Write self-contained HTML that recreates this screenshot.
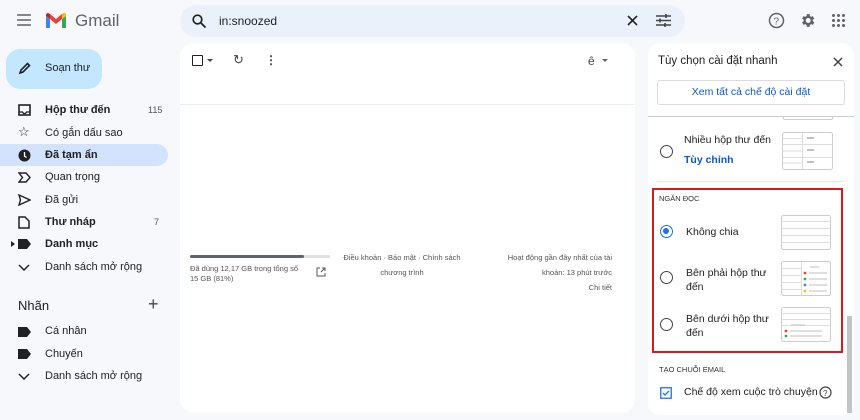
<!DOCTYPE html><html><head><meta charset="utf-8"><style>
*{margin:0;padding:0;box-sizing:border-box}
body{width:860px;height:420px;background:#f6f8fc;font-family:"Liberation Sans",sans-serif;color:#202124;position:relative;overflow:hidden;font-size:11px}
.a{position:absolute}
.nav{position:absolute;left:45px;font-size:11px;color:#202124}
.ic{position:absolute;left:18px}
.th{position:absolute;border:1px solid #ccc;border-radius:2px;background:#fff}
.rad{position:absolute;left:660px;width:13px;height:13px;border:1.5px solid #444;border-radius:50%}
</style></head><body>
<!-- header -->
<svg class="a" style="left:17px;top:14px" width="14" height="12"><path d="M0 1h14M0 6h14M0 11h14" stroke="#5f6368" stroke-width="1.6"/></svg>
<svg class="a" style="left:45px;top:12px" width="22" height="17" viewBox="0 0 22 17"><path d="M1 4v12h4V7z" fill="#4285f4"/><path d="M17 7v9h4V4z" fill="#34a853"/><path d="M17 2v5l4-3V3c0-2-2-3-4-1z" fill="#fbbc04"/><path d="M5 7V2l6 5 6-5v5l-6 5z" fill="#ea4335"/><path d="M1 3c0-2 2-2.5 4-1v5L1 4z" fill="#c5221f"/></svg>
<div class="a" style="left:75px;top:11px;font-size:17px;color:#5f6368">Gmail</div>
<div class="a" style="left:180px;top:5px;width:505px;height:32px;background:#eaf1fb;border-radius:16px"></div>
<svg class="a" style="left:192px;top:14px" width="14" height="14"><circle cx="5.5" cy="5.5" r="4.3" stroke="#202124" stroke-width="1.7" fill="none"/><path d="M9 9l4.5 4.5" stroke="#202124" stroke-width="1.8"/></svg>
<div class="a" style="left:219px;top:14px;font-size:12px">in:snoozed</div>
<svg class="a" style="left:627px;top:15px" width="11" height="11"><path d="M1 1l9 9M10 1l-9 9" stroke="#202124" stroke-width="1.6"/></svg>
<svg class="a" style="left:656px;top:14px" width="15" height="13"><path d="M0 2h15M0 6.5h15M0 11h15" stroke="#444" stroke-width="1.5"/><path d="M10 0v4M4 4.5v4M9 9v4" stroke="#444" stroke-width="1.6"/></svg>
<svg class="a" style="left:768px;top:12px" width="17" height="17"><circle cx="8.5" cy="8.5" r="7" fill="none" stroke="#5f6368" stroke-width="1.5"/><text x="5.5" y="12.5" font-size="10" fill="#5f6368" font-family="Liberation Sans">?</text></svg>
<svg class="a" style="left:799px;top:12px" width="17" height="17" viewBox="0 0 24 24"><path fill="#5f6368" d="M19.4 13a7.5 7.5 0 000-2l2.1-1.6-2-3.5-2.5 1a7 7 0 00-1.7-1L15 3h-4l-.4 2.9a7 7 0 00-1.7 1l-2.5-1-2 3.5L6.5 11a7.5 7.5 0 000 2l-2.1 1.6 2 3.5 2.5-1a7 7 0 001.7 1L11 21h4l.4-2.9a7 7 0 001.7-1l2.5 1 2-3.5zM13 15.5a3.5 3.5 0 110-7 3.5 3.5 0 010 7z"/></svg>
<svg class="a" style="left:832px;top:14px" width="13" height="13"><g fill="#5f6368"><circle cx="1.5" cy="1.5" r="1.5"/><circle cx="6.5" cy="1.5" r="1.5"/><circle cx="11.5" cy="1.5" r="1.5"/><circle cx="1.5" cy="6.5" r="1.5"/><circle cx="6.5" cy="6.5" r="1.5"/><circle cx="11.5" cy="6.5" r="1.5"/><circle cx="1.5" cy="11.5" r="1.5"/><circle cx="6.5" cy="11.5" r="1.5"/><circle cx="11.5" cy="11.5" r="1.5"/></g></svg>
<!-- sidebar -->
<div class="a" style="left:6px;top:49px;width:96px;height:40px;background:#c2e7ff;border-radius:14px"></div>
<svg class="a" style="left:18px;top:62px" width="13" height="13"><path d="M2 11l1-3 6.5-6.5 2 2L5 10z" fill="none" stroke="#202124" stroke-width="1.6"/></svg>
<div class="a" style="left:45px;top:62px;font-size:11px">Soạn thư</div>
<div class="a" style="left:0;top:144px;width:168px;height:22px;background:#d3e3fd;border-radius:0 11px 11px 0"></div>
<svg class="ic" style="top:104px" width="13" height="12"><rect x="1" y="1" width="11" height="10" fill="none" stroke="#202124" stroke-width="1.6"/><path d="M1 8h3.5l1 1.5h2l1-1.5H12" stroke="#202124" fill="none" stroke-width="1.3"/></svg>
<div class="nav" style="top:104px;font-weight:bold">Hộp thư đến</div><div class="a" style="left:148px;top:105px;font-size:9px;color:#555">115</div>
<div class="ic" style="top:124px;font-size:13px;left:18px">☆</div><div class="nav" style="top:127px">Có gắn dấu sao</div>
<svg class="ic" style="top:149px" width="13" height="13"><circle cx="6.5" cy="6.5" r="6" fill="#202124"/><path d="M6.5 3v4l2 1.5" stroke="#fff" stroke-width="1.3" fill="none"/></svg>
<div class="nav" style="top:149px;font-weight:bold">Đã tạm ẩn</div>
<svg class="ic" style="top:172px" width="13" height="11"><path d="M1 1h7l4 4.5L8 10H1l3.5-4.5z" fill="none" stroke="#202124" stroke-width="1.4"/></svg><div class="nav" style="top:171px">Quan trọng</div>
<svg class="ic" style="top:194px" width="13" height="12"><path d="M1 1l11 5-11 5 1.5-5z" fill="none" stroke="#202124" stroke-width="1.4"/></svg><div class="nav" style="top:194px">Đã gửi</div>
<svg class="ic" style="top:216px" width="12" height="13"><path d="M1 1h6l4 4v7H1z" fill="none" stroke="#202124" stroke-width="1.5"/></svg><div class="nav" style="top:216px;font-weight:bold">Thư nháp</div><div class="a" style="left:154px;top:217px;font-size:9px;color:#555">7</div>
<div class="a" style="left:11px;top:241px;border-left:4px solid #202124;border-top:3px solid transparent;border-bottom:3px solid transparent"></div>
<svg class="ic" style="top:239px" width="13" height="10"><path d="M0 0h9l4 5-4 5H0z" fill="#202124"/></svg><div class="nav" style="top:238px;font-weight:bold">Danh mục</div>
<svg class="ic" style="top:264px" width="12" height="7"><path d="M1 1l5 5 5-5" stroke="#202124" fill="none" stroke-width="1.5"/></svg><div class="nav" style="top:261px">Danh sách mở rộng</div>
<div class="a" style="left:18px;top:298px;font-size:13px">Nhãn</div>
<div class="a" style="left:148px;top:294px;font-size:18px;color:#444">+</div>
<svg class="ic" style="top:327px" width="13" height="10"><path d="M0 0h9l4 5-4 5H0z" fill="#202124"/></svg><div class="nav" style="top:325px">Cá nhân</div>
<svg class="ic" style="top:349px" width="13" height="10"><path d="M0 0h9l4 5-4 5H0z" fill="#202124"/></svg><div class="nav" style="top:348px">Chuyến</div>
<svg class="ic" style="top:373px" width="12" height="7"><path d="M1 1l5 5 5-5" stroke="#202124" fill="none" stroke-width="1.5"/></svg><div class="nav" style="top:370px">Danh sách mở rộng</div>
<!-- main -->
<div class="a" style="left:180px;top:43px;width:455px;height:370px;background:#fff;border-radius:14px"></div>
<div class="a" style="left:180px;top:104px;width:455px;height:1px;background:#eee"></div>
<div class="a" style="left:192px;top:55px;width:11px;height:11px;border:1.6px solid #202124;border-radius:1px"></div>
<div class="a" style="left:207px;top:59px;border-top:3px solid #444;border-left:3px solid transparent;border-right:3px solid transparent"></div>
<div class="a" style="left:233px;top:52px;font-size:13px;color:#444">↻</div>
<div class="a" style="left:265px;top:53px;font-size:12px;font-weight:bold;color:#444">⋮</div>
<div class="a" style="left:588px;top:54px;font-size:12px;color:#444">ê</div>
<div class="a" style="left:602px;top:59px;border-top:3px solid #666;border-left:3px solid transparent;border-right:3px solid transparent"></div>
<div class="a" style="left:190px;top:255px;width:140px;height:3px;background:#e0e0e0;border-radius:2px"></div>
<div class="a" style="left:190px;top:255px;width:114px;height:3px;background:#5f6368;border-radius:2px"></div>
<div class="a" style="left:190px;top:264px;font-size:7.5px;color:#555;line-height:10px;width:118px">Đã dùng 12,17 GB trong tổng số 15 GB (81%)</div>
<svg class="a" style="left:316px;top:267px" width="10" height="10"><path d="M4 1H1v8h8V6M5 5l4-4M6 1h3v3" stroke="#555" fill="none" stroke-width="1"/></svg>
<div class="a" style="left:335px;top:250px;width:134px;font-size:7.5px;color:#555;line-height:15px;text-align:center">Điều khoản · Bảo mật · Chính sách chương trình</div>
<div class="a" style="left:490px;top:250px;width:122px;font-size:7.5px;color:#555;line-height:15px;text-align:right">Hoạt động gần đây nhất của tài khoản: 13 phút trước<br>Chi tiết</div>
<!-- right panel -->
<div class="a" style="left:648px;top:43px;width:206px;height:372px;background:#fff;border-radius:12px"></div>
<div class="a" style="left:658px;top:55px;font-size:11.5px">Tùy chọn cài đặt nhanh</div>
<svg class="a" style="left:833px;top:57px" width="10" height="10"><path d="M1 1l8 8M9 1l-8 8" stroke="#444" stroke-width="1.5"/></svg>
<div class="a" style="left:657px;top:80px;width:188px;height:25px;border:1px solid #dadce0;border-radius:3px;color:#0b57d0;text-align:center;line-height:23px;font-size:10.5px">Xem tất cả chế độ cài đặt</div>
<div class="a" style="left:648px;top:116px;width:206px;height:1px;background:#ccc"></div>
<div class="a" style="left:783px;top:116px;width:50px;height:4px;border:1px solid #ccc;border-top:0;border-radius:0 0 2px 2px"></div>
<div class="rad" style="top:145px"></div>
<div class="a" style="left:684px;top:134px;font-size:10.5px">Nhiều hộp thư đến</div>
<div class="a" style="left:684px;top:154px;font-size:10.5px;color:#0b57d0;font-weight:bold">Tùy chỉnh</div>
<svg class="a" style="left:782px;top:132px" width="51" height="38"><rect x=".5" y=".5" width="50" height="37" rx="2" fill="#fff" stroke="#ccc"/><path d="M.5 12.5h50M.5 25.5h50M20.5 .5v37M.5 6.5h20M.5 19h20M.5 31h20" stroke="#ddd"/><path d="M25 6h7M25 18h7M25 30h7" stroke="#aaa" stroke-width="1.5"/></svg>
<div class="a" style="left:657px;top:181px;width:187px;height:1px;background:#e6e6e6"></div>
<div class="a" style="left:652px;top:188px;width:191px;height:165px;border:2px solid #d71920"></div>
<div class="a" style="left:659px;top:194px;font-size:7.5px;color:#333">NGĂN ĐỌC</div>
<div class="rad" style="top:225px;border-color:#1a73e8"><div style="position:absolute;left:2px;top:2px;width:6px;height:6px;border-radius:50%;background:#1a73e8"></div></div>
<div class="a" style="left:686px;top:226px;font-size:10.5px">Không chia</div>
<svg class="a" style="left:781px;top:215px" width="50" height="35"><rect x=".5" y=".5" width="49" height="34" rx="2" fill="#fff" stroke="#ccc"/><path d="M.5 6.5h49M.5 13.5h49M.5 20.5h49M.5 27.5h49" stroke="#ddd"/></svg>
<div class="rad" style="top:271px"></div>
<div class="a" style="left:686px;top:266px;font-size:10.5px;line-height:14px;width:90px">Bên phải hộp thư đến</div>
<svg class="a" style="left:781px;top:261px" width="50" height="35"><rect x=".5" y=".5" width="49" height="34" rx="2" fill="#fff" stroke="#ccc"/><path d="M20.5 .5v34M.5 7.5h20M.5 14.5h20M.5 21.5h20M.5 28.5h20" stroke="#ddd"/><path d="M29 6h9M28 12h18M28 18h18M28 24h18M28 30h18" stroke="#ccc" stroke-width="1.2"/><circle cx="24" cy="12" r="1.4" fill="#ea4335"/><circle cx="24" cy="18" r="1.4" fill="#34a853"/><circle cx="24" cy="24" r="1.4" fill="#4285f4"/><circle cx="24" cy="30" r="1.4" fill="#fbbc04"/></svg>
<div class="rad" style="top:318px"></div>
<div class="a" style="left:686px;top:312px;font-size:10.5px;line-height:14px;width:90px">Bên dưới hộp thư đến</div>
<svg class="a" style="left:781px;top:307px" width="50" height="35"><rect x=".5" y=".5" width="49" height="34" rx="2" fill="#fff" stroke="#ccc"/><path d="M.5 6.5h49M.5 12.5h49M.5 18.5h49" stroke="#ddd"/><path d="M10 18h14M9 24h32M9 29h32" stroke="#ccc" stroke-width="1.2"/><circle cx="5" cy="24" r="1.4" fill="#ea4335"/><circle cx="5" cy="29" r="1.4" fill="#34a853"/></svg>
<div class="a" style="left:659px;top:365px;font-size:7.5px;color:#333">TẠO CHUỖI EMAIL</div>
<svg class="a" style="left:660px;top:387px" width="12" height="12"><rect x=".75" y=".75" width="10.5" height="10.5" fill="none" stroke="#1a73e8" stroke-width="1.3"/><path d="M3 6l2 2 4-4" stroke="#1a73e8" fill="none" stroke-width="1.3"/></svg>
<div class="a" style="left:684px;top:386px;font-size:10.5px">Chế độ xem cuộc trò chuyện</div>
<svg class="a" style="left:819px;top:386px" width="13" height="13"><circle cx="6.5" cy="6.5" r="5.5" fill="none" stroke="#444" stroke-width="1.2"/><text x="4" y="10" font-size="8" fill="#444" font-family="Liberation Sans">?</text></svg>
<div class="a" style="left:847px;top:316px;width:5px;height:97px;background:#c4c4c4"></div>
</body></html>
